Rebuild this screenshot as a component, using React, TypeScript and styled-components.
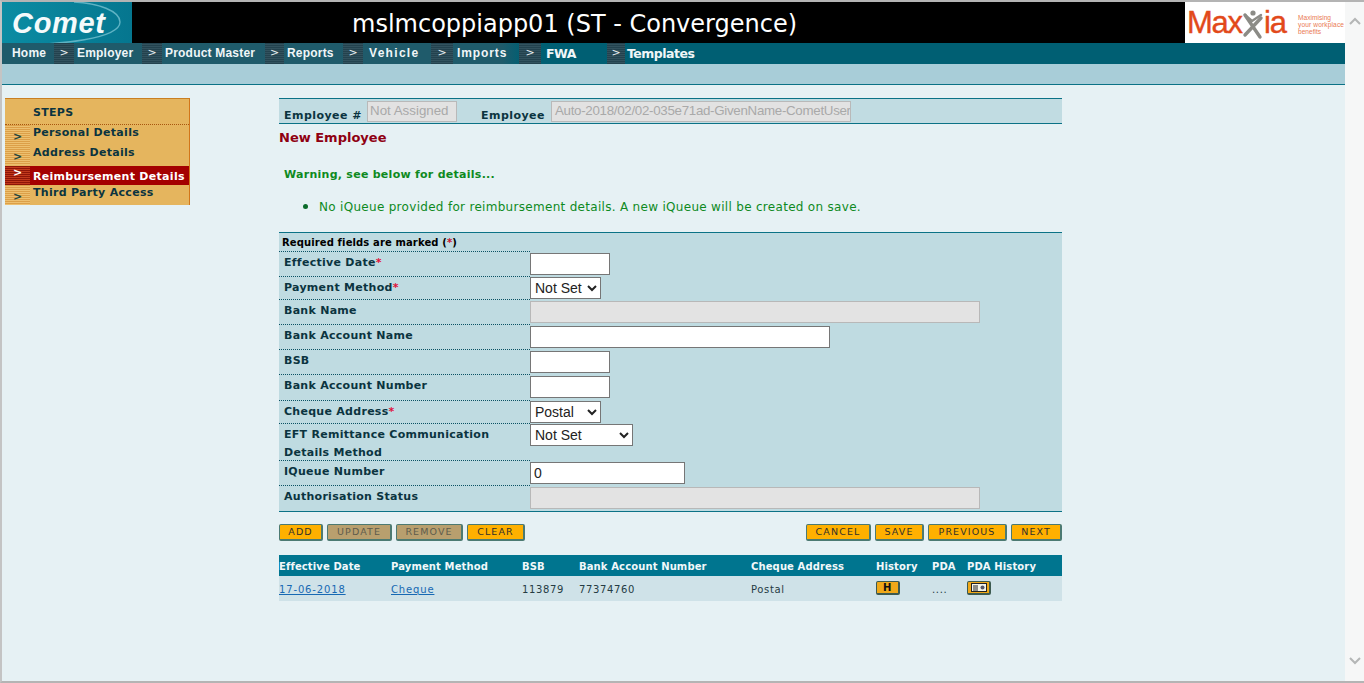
import React from "react";
import styled, { createGlobalStyle, css } from "styled-components";

const Global = createGlobalStyle`
  html, body { margin: 0; padding: 0; overflow: hidden; }
  body { font-family: "DejaVu Sans", Verdana, sans-serif; background: #e6f1f4; }
  * { box-sizing: border-box; }
`;

const Frame = styled.div`
  display: flex;
  width: 1364px;
  height: 683px;
  border-top: 2px solid #b4b4b4;
  border-bottom: 2px solid #b4b4b4;
  border-left: 2px solid #c4c4c4;
`;
const Main = styled.div`
  flex: 1;
  display: flex;
  flex-direction: column;
  min-width: 0;
`;
const Scrollbar = styled.div`
  width: 19px;
  background: #f6f7f7;
  color: #b4b6b6;
  display: flex;
  flex-direction: column;
  align-items: center;
  justify-content: space-between;
  padding: 15px 0 16px;
`;

const Header = styled.header`
  display: flex;
  height: 41px;
  background: #000;
`;
const Title = styled.h1`
  flex: 1;
  margin: 0;
  padding-left: 220px;
  color: #fff;
  font-weight: normal;
  font-size: 24px;
  line-height: 44px;
  white-space: nowrap;
`;

const Nav = styled.nav`
  display: flex;
  height: 21px;
  background: linear-gradient(90deg, #1f5b6b 0, #1f5b6b 500px, #005f73 520px);
`;
const NavHome = styled.div`
  width: 52px;
  padding-left: 10px;
`;
const NavLabel = styled.span<{ $w?: number; $plain?: boolean; $spacing?: number }>`
  display: block;
  width: ${(p) => (p.$w ? `${p.$w}px` : "auto")};
  color: #f0f6f8;
  font-weight: bold;
  line-height: 21px;
  white-space: nowrap;
  ${(p) =>
    p.$plain
      ? css`
          font-size: 12.5px;
          font-family: "DejaVu Sans", sans-serif;
          letter-spacing: -0.5px;
        `
      : css`
          font-size: 12px;
          font-family: "Liberation Sans", Arial, sans-serif;
          letter-spacing: ${p.$spacing ?? 0.2}px;
        `}
`;
const NavArrow = styled.span<{ $w: number; $right: number }>`
  width: ${(p) => p.$w}px;
  margin-right: ${(p) => p.$right}px;
  background: repeating-linear-gradient(180deg, #23424e 0, #23424e 1px, #32525e 1px, #32525e 2px);
  color: #e8f0f2;
  font-size: 11px;
  line-height: 19px;
  text-align: center;
`;
const SubBar = styled.div`
  height: 20px;
  background: #a8cdd8;
`;
const Rule = styled.div`
  height: 1px;
  background: #0b7286;
`;

const Body = styled.div`
  flex: 1;
  display: flex;
  gap: 89px;
  padding: 13px 0 0 3px;
  background: #e6f1f4;
`;

const Steps = styled.aside`
  width: 185px;
  height: 107px;
  background: #e5b55e;
  border-top: 1px solid #c97f22;
  border-right: 1px solid #d2761a;
`;
const StepsTitle = styled.div`
  height: 26px;
  padding: 7px 0 0 28px;
  border-bottom: 1px dotted #a8560f;
  color: #0b3440;
  font-size: 11px;
  font-weight: bold;
  line-height: 14px;
  letter-spacing: 0.3px;
`;
const Step = styled.div<{ $h: number; $active?: boolean }>`
  display: flex;
  height: ${(p) => p.$h}px;
  margin-top: ${(p) => (p.$active ? 1 : 0)}px;
  background: ${(p) => (p.$active ? "#a40000" : "transparent")};
`;
const StepArrow = styled.span<{ $active?: boolean; $top: number }>`
  width: 25px;
  padding: ${(p) => p.$top}px 0 0 8px;
  background: ${(p) =>
    p.$active
      ? "repeating-linear-gradient(180deg, #8e1608 0, #8e1608 1px, #c23a1c 1px, #c23a1c 2px)"
      : "repeating-linear-gradient(180deg, #dc9f48 0, #dc9f48 1px, #edc070 1px, #edc070 2px)"};
  color: ${(p) => (p.$active ? "#fff" : "#24483f")};
  font-size: 11px;
  font-weight: bold;
  line-height: 12px;
`;
const StepLabel = styled.span<{ $active?: boolean; $top: number }>`
  padding: ${(p) => p.$top}px 0 0 3px;
  color: ${(p) => (p.$active ? "#fff" : "#0b3440")};
  font-size: 11px;
  font-weight: bold;
  line-height: 14px;
  letter-spacing: 0.3px;
  white-space: nowrap;
`;

const Content = styled.main`
  width: 783px;
`;
const EmployeeBar = styled.div`
  display: flex;
  height: 26px;
  padding: 2px 0 0 5px;
  background: #c1dce2;
  border-top: 1px solid #0b7286;
  border-bottom: 1px solid #0b7286;
`;
const BarLabel = styled.span<{ $w: number }>`
  width: ${(p) => p.$w}px;
  padding-top: 8px;
  color: #0b3440;
  font-size: 11px;
  font-weight: bold;
  line-height: 14px;
  letter-spacing: 0.45px;
  white-space: nowrap;
`;
const ReadOnly = styled.span<{ $w: number; $gap: number; $tight?: boolean }>`
  width: ${(p) => p.$w}px;
  height: 21px;
  margin-right: ${(p) => p.$gap}px;
  padding-left: ${(p) => (p.$tight ? 3 : 2)}px;
  background: #e2e2e2;
  border: 1px solid #b9b9b9;
  color: #a9a9a9;
  font-family: "Liberation Sans", Arial, sans-serif;
  font-size: 13.33px;
  line-height: 18px;
  letter-spacing: ${(p) => (p.$tight ? -0.3 : 0)}px;
  white-space: nowrap;
  overflow: hidden;
`;
const Heading = styled.h2`
  margin: 6px 0 0;
  color: #8f0012;
  font-size: 13px;
  font-weight: bold;
  line-height: 16px;
`;
const Warning = styled.div`
  margin: 21px 0 0 5px;
  color: #0e8a1e;
  font-size: 11px;
  font-weight: bold;
  line-height: 16px;
  letter-spacing: 0.27px;
`;
const Notices = styled.ul`
  margin: 15px 0 0;
  padding: 0 0 0 40px;
  color: #0e8a1e;
  font-size: 12px;
  line-height: 16px;
  letter-spacing: 0.3px;
  li { height: 16px; }
  li::marker { font-size: 15px; color: #0b6b2a; }
`;

const Form = styled.section`
  margin-top: 18px;
  height: 280px;
  background: #bfdbe1;
  border-top: 1px solid #0b7286;
  border-bottom: 1px solid #0b7286;
`;
const Required = styled.div`
  width: 251px;
  height: 19px;
  padding: 2px 0 0 3px;
  border-bottom: 1px dotted #0b5264;
  color: #000;
  font-size: 10px;
  font-weight: bold;
  line-height: 15px;
  letter-spacing: 0.12px;
  white-space: nowrap;
  b { color: #c8102e; }
`;
const Row = styled.div<{ $h: number }>`
  display: flex;
  height: ${(p) => p.$h}px;
`;
const Label = styled.div<{ $last?: boolean }>`
  width: 251px;
  padding: 2px 0 0 5px;
  border-bottom: ${(p) => (p.$last ? "none" : "1px dotted #0b5264")};
  color: #0b3440;
  font-size: 11px;
  font-weight: bold;
  line-height: 18px;
  letter-spacing: 0.28px;
  b { color: #e0103a; }
`;
const fieldText = css`
  display: block;
  height: 22px;
  font-family: "Liberation Sans", Arial, sans-serif;
  font-size: 14px;
  color: #222;
`;
const Input = styled.input<{ $w: number }>`
  ${fieldText}
  width: ${(p) => p.$w}px;
  margin: 1px 0 0;
  padding: 0 3px;
  background: #fff;
  border: 1px solid #767676;
  &:disabled { background: #e3e3e3; border-color: #b8b8b8; }
`;
const Select = styled.select<{ $w: number }>`
  ${fieldText}
  width: ${(p) => p.$w}px;
  margin: 0;
  background-color: #fff;
  border: 1px solid #767676;
  border-radius: 0;
`;

const ButtonRow = styled.div`
  display: flex;
  justify-content: space-between;
  margin-top: 12px;
  height: 18px;
`;
const ButtonGroup = styled.div`
  display: flex;
  gap: 4px;
`;
const Button = styled.button<{ $w: number; $off?: boolean }>`
  width: ${(p) => p.$w}px;
  height: 17px;
  padding: 0 0 1px;
  background: ${(p) => (p.$off ? "#b89f6e" : "#ffb000")};
  border: 1px solid #4c7a72;
  border-right-width: 2px;
  border-bottom-width: 2px;
  border-radius: 2px;
  color: ${(p) => (p.$off ? "#5e5c4c" : "#33302a")};
  font-family: "DejaVu Sans", sans-serif;
  font-size: 9.5px;
  line-height: 12px;
  letter-spacing: 1.1px;
`;

const Table = styled.div`
  margin-top: 13px;
`;
const tableCols = css`
  display: grid;
  grid-template-columns: 112px 131px 57px 172px 125px 56px 35px 1fr;
`;
const TableHead = styled.div`
  ${tableCols}
  height: 21px;
  padding-top: 1px;
  background: #00758f;
  color: #f2f8fa;
  font-size: 10px;
  font-weight: bold;
  line-height: 22px;
  letter-spacing: 0.12px;
  white-space: nowrap;
`;
const TableRow = styled.div`
  ${tableCols}
  height: 25px;
  background: #cfe2e8;
  color: #253c44;
  font-size: 10px;
  line-height: 27px;
  letter-spacing: 0.65px;
`;
const CellLink = styled.a`
  color: #1769b3;
  text-decoration: underline;
  letter-spacing: 0.85px;
`;
const IconButton = styled.span`
  display: flex;
  align-items: center;
  justify-content: center;
  width: 24px;
  height: 14px;
  margin-top: 5px;
  background: #f0a818;
  border: 1px solid #3d5a50;
  border-right-width: 2px;
  border-bottom-width: 2px;
  border-radius: 2px;
  color: #111;
  font-size: 10px;
  font-weight: bold;
  line-height: 12px;
`;

function CometLogo() {
  return (
    <svg width="130" height="41" viewBox="0 0 130 41">
      <defs>
        <linearGradient id="comet-bg" x1="0" y1="0" x2="1" y2="0">
          <stop offset="0" stopColor="#0b8ca3" />
          <stop offset="1" stopColor="#05768f" />
        </linearGradient>
      </defs>
      <rect width="130" height="41" fill="url(#comet-bg)" />
      <path d="M6 42 C60 44 118 36 118 20 C118 9 96 1 72 0" fill="none" stroke="#5fb3c4" strokeWidth="1.4" />
      <text x="10" y="31" fill="#f4fafb" fontFamily="'Liberation Sans', Arial, sans-serif" fontSize="29" fontWeight="bold" fontStyle="italic" textLength="93">
        Comet
      </text>
    </svg>
  );
}

function MaxxiaLogo() {
  return (
    <svg width="160" height="41" viewBox="0 0 160 41">
      <rect width="160" height="41" fill="#fff" />
      <text x="2" y="31" fill="#e2491a" stroke="#e2491a" strokeWidth="0.4" fontFamily="'Liberation Sans', Arial, sans-serif" fontSize="31" textLength="56">
        Max
      </text>
      <path d="M60 13 L75 35 M76 16 L60 33" stroke="#8b8b86" strokeWidth="3.4" fill="none" strokeLinecap="round" />
      <path d="M60 13 L67 19 L76 13" stroke="#8b8b86" strokeWidth="2.4" fill="none" strokeLinecap="round" />
      <circle cx="68" cy="11" r="2.6" fill="#8b8b86" />
      <text x="79" y="31" fill="#e2491a" stroke="#e2491a" strokeWidth="0.4" fontFamily="'Liberation Sans', Arial, sans-serif" fontSize="31" textLength="23">
        ia
      </text>
      <g fill="#ea7a55" fontFamily="'Liberation Sans', Arial, sans-serif" fontSize="6.6">
        <text x="113" y="18">Maximising</text>
        <text x="113" y="25" textLength="46">your workplace</text>
        <text x="113" y="32">benefits</text>
      </g>
    </svg>
  );
}

function Chevron({ up }: { up?: boolean }) {
  return (
    <svg width="12" height="8" viewBox="0 0 12 8">
      <path d={up ? "M1 7 L6 2 L11 7" : "M1 1 L6 6 L11 1"} fill="none" stroke="currentColor" strokeWidth="2" />
    </svg>
  );
}

const navItems = [
  { label: "Employer", w: 20, right: 3, labelW: 65 },
  { label: "Product Master", w: 20, right: 3, labelW: 100 },
  { label: "Reports", w: 19, right: 3, labelW: 56 },
  { label: "Vehicle", w: 20, right: 6, labelW: 62, spacing: 1.3 },
  { label: "Imports", w: 22, right: 4, labelW: 62, spacing: 0.9 },
  { label: "FWA", w: 22, right: 5, labelW: 61, plain: true },
  { label: "Templates", w: 18, right: 2, labelW: 70, plain: true },
];

const steps = [
  { label: "Personal Details", h: 20, arrow: 6, top: 1 },
  { label: "Address Details", h: 20, arrow: 6, top: 1 },
  { label: "Reimbursement Details", h: 19, arrow: 1, top: 4, active: true },
  { label: "Third Party Access", h: 20, arrow: 6, top: 1 },
];

const buttonsLeft = [
  { label: "ADD", w: 44 },
  { label: "UPDATE", w: 65, off: true },
  { label: "REMOVE", w: 67, off: true },
  { label: "CLEAR", w: 58 },
];
const buttonsRight = [
  { label: "CANCEL", w: 65 },
  { label: "SAVE", w: 49 },
  { label: "PREVIOUS", w: 79 },
  { label: "NEXT", w: 51 },
];

export default function App() {
  return (
    <>
      <Global />
      <Frame>
        <Main>
          <Header>
            <CometLogo />
            <Title>mslmcoppiapp01 (ST - Convergence)</Title>
            <MaxxiaLogo />
          </Header>
          <Nav>
            <NavHome>
              <NavLabel>Home</NavLabel>
            </NavHome>
            {navItems.map((item) => (
              <React.Fragment key={item.label}>
                <NavArrow $w={item.w} $right={item.right}>&gt;</NavArrow>
                <NavLabel $w={item.labelW} $plain={item.plain} $spacing={item.spacing}>{item.label}</NavLabel>
              </React.Fragment>
            ))}
          </Nav>
          <SubBar />
          <Rule />
          <Body>
            <Steps>
              <StepsTitle>STEPS</StepsTitle>
              {steps.map((s) => (
                <Step key={s.label} $h={s.h} $active={s.active}>
                  <StepArrow $active={s.active} $top={s.arrow}>&gt;</StepArrow>
                  <StepLabel $active={s.active} $top={s.top}>{s.label}</StepLabel>
                </Step>
              ))}
            </Steps>
            <Content>
              <EmployeeBar>
                <BarLabel $w={83}>Employee #</BarLabel>
                <ReadOnly $w={90} $gap={24}>Not Assigned</ReadOnly>
                <BarLabel $w={70}>Employee</BarLabel>
                <ReadOnly $w={300} $gap={0} $tight>Auto-2018/02/02-035e71ad-GivenName-CometUser</ReadOnly>
              </EmployeeBar>
              <Heading>New Employee</Heading>
              <Warning>Warning, see below for details...</Warning>
              <Notices>
                <li>No iQueue provided for reimbursement details. A new iQueue will be created on save.</li>
              </Notices>
              <Form>
                <Required>Required fields are marked (<b>*</b>)</Required>
                <Row $h={25}>
                  <Label>Effective Date<b>*</b></Label>
                  <Input $w={80} />
                </Row>
                <Row $h={23}>
                  <Label>Payment Method<b>*</b></Label>
                  <Select $w={71} defaultValue="Not Set"><option>Not Set</option></Select>
                </Row>
                <Row $h={25}>
                  <Label>Bank Name</Label>
                  <Input $w={450} disabled />
                </Row>
                <Row $h={25}>
                  <Label>Bank Account Name</Label>
                  <Input $w={300} />
                </Row>
                <Row $h={25}>
                  <Label>BSB</Label>
                  <Input $w={80} />
                </Row>
                <Row $h={26}>
                  <Label>Bank Account Number</Label>
                  <Input $w={80} />
                </Row>
                <Row $h={23}>
                  <Label>Cheque Address<b>*</b></Label>
                  <Select $w={71} defaultValue="Postal"><option>Postal</option></Select>
                </Row>
                <Row $h={37}>
                  <Label>EFT Remittance Communication Details Method</Label>
                  <Select $w={103} defaultValue="Not Set"><option>Not Set</option></Select>
                </Row>
                <Row $h={25}>
                  <Label>IQueue Number</Label>
                  <Input $w={155} defaultValue="0" />
                </Row>
                <Row $h={25}>
                  <Label $last>Authorisation Status</Label>
                  <Input $w={450} disabled />
                </Row>
              </Form>
              <ButtonRow>
                <ButtonGroup>
                  {buttonsLeft.map((b) => (
                    <Button key={b.label} $w={b.w} $off={b.off}>{b.label}</Button>
                  ))}
                </ButtonGroup>
                <ButtonGroup>
                  {buttonsRight.map((b) => (
                    <Button key={b.label} $w={b.w}>{b.label}</Button>
                  ))}
                </ButtonGroup>
              </ButtonRow>
              <Table>
                <TableHead>
                  <span>Effective Date</span>
                  <span>Payment Method</span>
                  <span>BSB</span>
                  <span>Bank Account Number</span>
                  <span>Cheque Address</span>
                  <span>History</span>
                  <span>PDA</span>
                  <span>PDA History</span>
                </TableHead>
                <TableRow>
                  <CellLink href="#">17-06-2018</CellLink>
                  <CellLink href="#">Cheque</CellLink>
                  <span>113879</span>
                  <span>77374760</span>
                  <span>Postal</span>
                  <IconButton>H</IconButton>
                  <span>....</span>
                  <IconButton>
                    <svg width="16" height="9" viewBox="0 0 16 9">
                      <rect x="0.5" y="0.5" width="15" height="8" fill="#f4f4ea" stroke="#222" />
                      <path d="M2 3h5M2 5h5M2 7h5" stroke="#222" strokeWidth="1" />
                      <circle cx="11.5" cy="4.5" r="2" fill="#556" />
                    </svg>
                  </IconButton>
                </TableRow>
              </Table>
            </Content>
          </Body>
        </Main>
        <Scrollbar>
          <Chevron up />
          <Chevron />
        </Scrollbar>
      </Frame>
    </>
  );
}
